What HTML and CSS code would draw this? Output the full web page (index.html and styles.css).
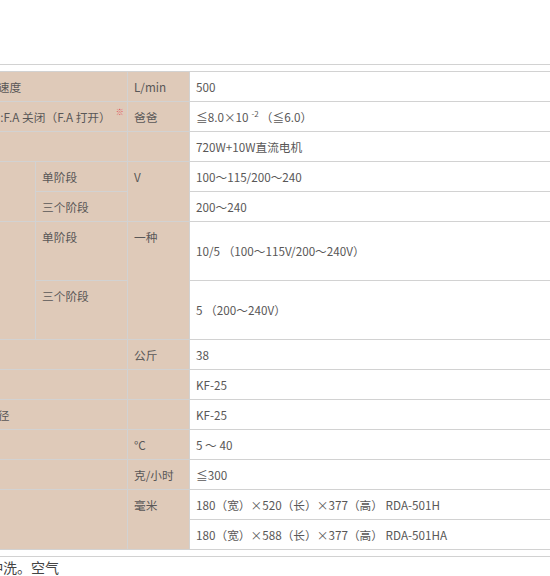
FILE: index.html
```html
<!DOCTYPE html>
<html lang="zh-CN">
<head>
<meta charset="utf-8">
<title>规格</title>
<link rel="stylesheet" href="styles.css">
</head>
<body>
<div class="page">
  <div class="rule"></div>
  <div class="spec">
    <table class="spec-table">
      <colgroup>
        <col class="c-label">
        <col class="c-sub">
        <col class="c-unit">
        <col class="c-value">
      </colgroup>
      <tbody>
        <tr class="r">
          <th colspan="2">额定排气速度</th>
          <th>L/min</th>
          <td>500</td>
        </tr>
        <tr class="r">
          <th colspan="2">极限压力 :F.A 关闭（F.A 打开）<sup class="note">※</sup></th>
          <th>爸爸</th>
          <td>≦8.0×10<sup class="exp">-2</sup>（≦6.0）</td>
        </tr>
        <tr class="r">
          <th colspan="2">电机</th>
          <th></th>
          <td>720W+10W直流电机</td>
        </tr>
        <tr class="r">
          <th rowspan="2">电源电压</th>
          <th>单阶段</th>
          <th rowspan="2">V</th>
          <td>100～115/200～240</td>
        </tr>
        <tr class="r">
          <th>三个阶段</th>
          <td>200～240</td>
        </tr>
        <tr class="r tall">
          <th rowspan="2">额定电流</th>
          <th>单阶段</th>
          <th rowspan="2">一种</th>
          <td>10/5 （100～115V/200～240V）</td>
        </tr>
        <tr class="r tall">
          <th>三个阶段</th>
          <td>5 （200～240V）</td>
        </tr>
        <tr class="r">
          <th colspan="2">重量</th>
          <th>公斤</th>
          <td>38</td>
        </tr>
        <tr class="r">
          <th colspan="2">进气口径</th>
          <th></th>
          <td>KF-25</td>
        </tr>
        <tr class="r">
          <th colspan="2">排气口直径</th>
          <th></th>
          <td>KF-25</td>
        </tr>
        <tr class="r">
          <th colspan="2">使用温度</th>
          <th>°C</th>
          <td>5 ～ 40</td>
        </tr>
        <tr class="r">
          <th colspan="2">油雾</th>
          <th>克/小时</th>
          <td>≦300</td>
        </tr>
        <tr class="r">
          <th colspan="2" rowspan="2">外形尺寸</th>
          <th rowspan="2">毫米</th>
          <td>180（宽）×520（长）×377（高） RDA-501H</td>
        </tr>
        <tr class="r">
          <td>180（宽）×588（长）×377（高） RDA-501HA</td>
        </tr>
      </tbody>
    </table>
    <div class="rule rule-bottom"></div>
    <p class="note-text">用氮气冲洗。空气</p>
  </div>
</div>
</body>
</html>
```

FILE: styles.css
```css
html, body {
  margin: 0;
  padding: 0;
  background: #ffffff;
}

body {
  font-family: "Noto Sans CJK SC", "Noto Sans", sans-serif;
  font-size: 11.7px;
  color: #595757;
  overflow: hidden;
}

.page {
  padding-top: 64px;
  width: 550px;
  overflow: hidden;
}

.rule {
  height: 1px;
  background: #d2d2d2;
  width: 560px;
}

.spec {
  margin-left: -56px;
  padding-top: 6px;
}

.spec .rule {
  margin-left: 56px;
}

.spec-table {
  table-layout: fixed;
  border-collapse: collapse;
  width: 616px;
  border-top: 1px solid #d2d2d2;
  border-bottom: 1px solid #d2d2d2;
}

.c-label { width: 91px; }
.c-sub { width: 92px; }
.c-unit { width: 62px; }
.c-value { width: 371px; }

.spec-table th,
.spec-table td {
  border: 1px solid #d2d2d2;
  text-align: left;
  font-weight: normal;
  line-height: 18px;
  padding: 0 6px;
  white-space: nowrap;
}

.spec-table th {
  background: #dfcab9;
  vertical-align: top;
  padding-top: 6px;
  padding-bottom: 5px;
}

.spec-table td {
  background: #ffffff;
  vertical-align: middle;
  border-left-color: #ffffff;
}

.spec-table .r {
  height: 30px;
}

.spec-table .r.tall {
  height: 59px;
}

.note {
  color: #e0505a;
  font-size: 8px;
  margin-left: 5px;
  vertical-align: 7px;
  line-height: 0;
}

.exp {
  font-size: 8px;
  vertical-align: 5px;
  line-height: 0;
  margin: 0 2px 0 3px;
}

.rule-bottom {
  margin-top: 6px;
}

.note-text {
  margin: 0;
  padding-left: 3px;
  font-size: 14px;
  line-height: 20px;
  color: #444444;
}
```
